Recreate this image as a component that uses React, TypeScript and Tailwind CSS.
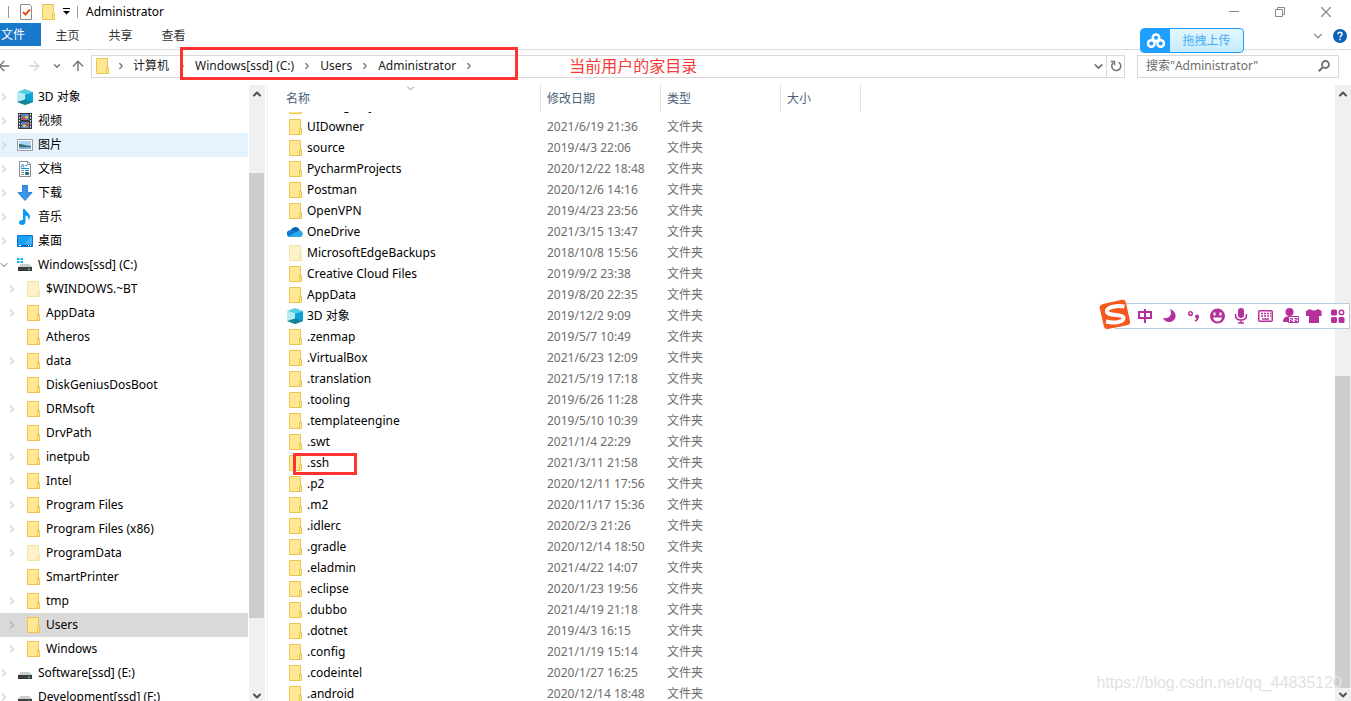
import React from "react";
import { ArrowLeft, ArrowRight, ArrowUp, ChevronDown, ChevronRight, ChevronUp, X } from "lucide-react";

type IconKind =
  | "folder"
  | "faded"
  | "onedrive"
  | "cube"
  | "video"
  | "picture"
  | "document"
  | "download"
  | "music"
  | "desktop"
  | "system"
  | "drive";

function ItemIcon({ kind }: { kind: IconKind }) {
  const common = { width: 16, height: 16, viewBox: "0 0 16 16", className: "shrink-0", "aria-hidden": true };
  switch (kind) {
    case "folder":
    case "faded":
      return (
        <svg {...common} opacity={kind === "faded" ? 0.5 : 1}>
          <path d="M2.5 .5h11v15h-11z" fill="#ffe794" stroke="#eac54f" />
          <path d="M12.5 9.5h2v6h-2z" fill="#ffe794" stroke="#eac54f" />
        </svg>
      );
    case "onedrive":
      return (
        <svg {...common}>
          <path d="M3.500 6.500A5 5 0 0 1 12.500 5.500L13 8 8 11 2 13Z" fill="#0364b8" />
          <path d="M3.200 13A3.300 3.300 0 0 1 3.300 6.200C6 5.500 8 7 10 8L5 13Z" fill="#0f78d4" />
          <path d="M1.500 12.500L9.500 7.800C11 6.300 13.500 5.800 15 7.600A3.300 3.300 0 0 1 13 13H3.200Z" fill="#28a8ea" />
        </svg>
      );
    case "cube":
      return (
        <svg {...common}>
          <path d="M0 3 8 0 16 3 8 5.500Z" fill="#55cfe0" />
          <path d="M0 3 8 5.500V16L0 13Z" fill="#b5ecf3" />
          <path d="M16 3 8 5.500V16l8-3Z" fill="#0aa4d6" />
          <path d="M0 13 8 10.500 16 13 8 16Z" fill="#16839b" />
        </svg>
      );
    case "video":
      return (
        <svg {...common}>
          <path d="M1 0h14v16H1z" fill="#3a3a3a" />
          <path d="M4 1h8v6H4z" fill="#5b83cc" />
          <path d="M4 9h8v6H4z" fill="#5b83cc" />
          <path d="M5 4h3v3H5zM9 10h2v3H9z" fill="#d9502e" />
          <path d="M8 3h3v2H8zM6 12h3v2H6z" fill="#e8c13c" />
          <path d="M2.500 1v15M13.500 1v15" stroke="#fff" strokeDasharray="1.500 1.500" />
        </svg>
      );
    case "picture":
      return (
        <svg {...common}>
          <path d="M.5 2.500h15v11H.5z" fill="#fff" stroke="#9a9a9a" />
          <path d="M2 4h12v8H2z" fill="#a9d5f2" />
          <path d="M2 7c4 0 7 2 12 2v2H2z" fill="#2f6f6e" />
          <path d="M2 10h12v2H2z" fill="#7fb0dc" />
        </svg>
      );
    case "document":
      return (
        <svg {...common}>
          <path d="M2.500 .5H11L13.500 3v12.500h-11z" fill="#fff" stroke="#8c8c8c" />
          <path d="M10.500 .5V3.500h3" fill="none" stroke="#8c8c8c" />
          <path d="M4 6.500 5.500 3 7 6.500M8 4.500h2M4 7.500h8M8 9.500h4" fill="none" stroke="#1b8ad6" />
          <path d="M4 9.500h3M4 11.500h3M4 13.500h3" stroke="#999" />
          <path d="M8 11h4v3H8z" fill="#3d6f86" />
        </svg>
      );
    case "download":
      return (
        <svg {...common}>
          <path d="M5.500 .5h5v7h4.500L8 15.500 1 7.500h4.500Z" fill="#3a96e8" stroke="#2c7fd0" />
        </svg>
      );
    case "music":
      return (
        <svg {...common}>
          <path
            d="M6 0h2c.5 3 5 4 5 7.500 0 1.500-.5 2.500-1.500 3.500.3-3-1-4-3-4.500V12.500C8.500 15 7 16 5 16c-1.700 0-3-.8-3-2.400C2 12 4 10.800 6 11.200Z"
            fill="#0c98f5"
          />
        </svg>
      );
    case "desktop":
      return (
        <svg {...common}>
          <path d="M.5 2.500h15v11H.5z" fill="#18a0fb" stroke="#0a78d0" />
          <path d="M15 3v8L7 11Z" fill="#3eb4ff" />
          <path d="M1 12.500h14" stroke="#0b5fa8" />
          <path d="M2 12.500h2M11 12.500h1M13 12.500h1" stroke="#fff" />
        </svg>
      );
    case "system":
    case "drive":
      return (
        <svg {...common}>
          {kind === "system" && (
            <path d="M0 1h2.500v2H0zM3.500 1H6v2H3.500zM0 4h2.500v2H0zM3.500 4H6v2H3.500z" fill="#12b4ee" />
          )}
          <path d="M3.500 7h9L15 10H1Z" fill="#cfcfcf" />
          <path d="M1 10h14v4H1z" fill="#3c3c3c" />
          <path d="M11 11.500h2V13h-2z" fill="#39e06a" />
        </svg>
      );
  }
}

type TreeItem = { name: string; icon: IconKind; level: 0 | 1; arrow?: "right" | "down"; state?: "hover" | "selected" };

const tree: TreeItem[] = [
  { name: "3D 对象", icon: "cube", level: 0, arrow: "right" },
  { name: "视频", icon: "video", level: 0, arrow: "right" },
  { name: "图片", icon: "picture", level: 0, arrow: "right", state: "hover" },
  { name: "文档", icon: "document", level: 0, arrow: "right" },
  { name: "下载", icon: "download", level: 0, arrow: "right" },
  { name: "音乐", icon: "music", level: 0, arrow: "right" },
  { name: "桌面", icon: "desktop", level: 0, arrow: "right" },
  { name: "Windows[ssd] (C:)", icon: "system", level: 0, arrow: "down" },
  { name: "$WINDOWS.~BT", icon: "faded", level: 1, arrow: "right" },
  { name: "AppData", icon: "folder", level: 1, arrow: "right" },
  { name: "Atheros", icon: "folder", level: 1 },
  { name: "data", icon: "folder", level: 1, arrow: "right" },
  { name: "DiskGeniusDosBoot", icon: "folder", level: 1 },
  { name: "DRMsoft", icon: "folder", level: 1, arrow: "right" },
  { name: "DrvPath", icon: "folder", level: 1 },
  { name: "inetpub", icon: "folder", level: 1, arrow: "right" },
  { name: "Intel", icon: "folder", level: 1, arrow: "right" },
  { name: "Program Files", icon: "folder", level: 1, arrow: "right" },
  { name: "Program Files (x86)", icon: "folder", level: 1, arrow: "right" },
  { name: "ProgramData", icon: "faded", level: 1, arrow: "right" },
  { name: "SmartPrinter", icon: "folder", level: 1 },
  { name: "tmp", icon: "folder", level: 1, arrow: "right" },
  { name: "Users", icon: "folder", level: 1, arrow: "right", state: "selected" },
  { name: "Windows", icon: "folder", level: 1, arrow: "right" },
  { name: "Software[ssd] (E:)", icon: "drive", level: 0, arrow: "right" },
  { name: "Development[ssd] (F:)", icon: "drive", level: 0, arrow: "right" },
];

type FileRow = { name: string; date: string; icon?: IconKind; marked?: boolean };

const files: FileRow[] = [
  { name: "UIDowner", date: "2021/6/19 21:36" },
  { name: "source", date: "2019/4/3 22:06" },
  { name: "PycharmProjects", date: "2020/12/22 18:48" },
  { name: "Postman", date: "2020/12/6 14:16" },
  { name: "OpenVPN", date: "2019/4/23 23:56" },
  { name: "OneDrive", date: "2021/3/15 13:47", icon: "onedrive" },
  { name: "MicrosoftEdgeBackups", date: "2018/10/8 15:56", icon: "faded" },
  { name: "Creative Cloud Files", date: "2019/9/2 23:38" },
  { name: "AppData", date: "2019/8/20 22:35" },
  { name: "3D 对象", date: "2019/12/2 9:09", icon: "cube" },
  { name: ".zenmap", date: "2019/5/7 10:49" },
  { name: ".VirtualBox", date: "2021/6/23 12:09" },
  { name: ".translation", date: "2021/5/19 17:18" },
  { name: ".tooling", date: "2019/6/26 11:28" },
  { name: ".templateengine", date: "2019/5/10 10:39" },
  { name: ".swt", date: "2021/1/4 22:29" },
  { name: ".ssh", date: "2021/3/11 21:58", marked: true },
  { name: ".p2", date: "2020/12/11 17:56" },
  { name: ".m2", date: "2020/11/17 15:36" },
  { name: ".idlerc", date: "2020/2/3 21:26" },
  { name: ".gradle", date: "2020/12/14 18:50" },
  { name: ".eladmin", date: "2021/4/22 14:07" },
  { name: ".eclipse", date: "2020/1/23 19:56" },
  { name: ".dubbo", date: "2021/4/19 21:18" },
  { name: ".dotnet", date: "2019/4/3 16:15" },
  { name: ".config", date: "2021/1/19 15:14" },
  { name: ".codeintel", date: "2020/1/27 16:25" },
  { name: ".android", date: "2020/12/14 18:48" },
];

function TitleBar() {
  return (
    <header className="flex h-[23px] shrink-0 items-center pl-2">
      <span className="h-3 w-px bg-[#999]" />
      <svg className="ml-[10px]" width="16" height="16" viewBox="0 0 16 16" aria-hidden>
        <path d="M1.500 .5h9l2 2v13h-11z" fill="#fff" stroke="#8a8a8a" />
        <path d="M4 8l2.500 2.500 4.500-5" fill="none" stroke="#e8501e" strokeWidth="2" />
      </svg>
      <span className="ml-[5px]">
        <ItemIcon kind="folder" />
      </span>
      <button aria-label="自定义快速访问工具栏" className="ml-[6px]">
        <svg width="9" height="7" viewBox="0 0 9 7" aria-hidden>
          <path d="M1 .5h7" stroke="#000" />
          <path d="M1 3h7L4.500 6.500Z" fill="#000" />
        </svg>
      </button>
      <span className="ml-[6px] h-3 w-px bg-[#999]" />
      <h1 className="ml-2 flex-1">Administrator</h1>
      <div className="mr-[2px] flex items-center text-[#888]">
        <button aria-label="最小化" className="flex w-[46px] justify-center">
          <span className="h-px w-[10px] bg-[#888]" />
        </button>
        <button aria-label="还原" className="flex w-[46px] justify-center">
          <svg width="10" height="10" viewBox="0 0 10 10" fill="none" stroke="currentColor" aria-hidden>
            <path d="M.5 2.500h7v7h-7zM2.500 2.500v-2h7v7h-2" />
          </svg>
        </button>
        <button aria-label="关闭" className="flex w-[46px] justify-center">
          <X size={18} strokeWidth={1.5} />
        </button>
      </div>
    </header>
  );
}

function Ribbon() {
  return (
    <nav className="flex h-[27px] shrink-0 items-start border-b border-[#dadbdc]">
      <button className="flex h-[23px] w-[41px] items-center bg-[#1979ca] pl-px pt-px text-white">文件</button>
      <button className="h-[23px] w-[53px] pt-[2px] text-[#333]">主页</button>
      <button className="h-[23px] w-[53px] pt-[2px] text-[#333]">共享</button>
      <button className="h-[23px] w-[53px] pt-[2px] text-[#333]">查看</button>
      <span className="flex-1" />
      <button aria-label="展开功能区" className="mr-2 flex h-[26px] items-center text-[#888]">
        <ChevronDown size={14} strokeWidth={2} />
      </button>
      <button aria-label="帮助" className="mr-1 flex h-[26px] items-center">
        <svg width="14" height="14" viewBox="0 0 14 14" aria-hidden>
          <circle cx="7" cy="7" r="7" fill="#0b62b8" />
          <path d="M5 5.200c0-2.600 4-2.600 4 0C9 6.800 7 6.700 7 8.600M7 9.700v1.600" fill="none" stroke="#fff" strokeWidth="1.500" />
        </svg>
      </button>
    </nav>
  );
}

function Crumb({ children }: { children: React.ReactNode }) {
  return (
    <li className="flex items-center">
      <a href="#" className="text-[#1a1a1a]">
        {children}
      </a>
      <ChevronRight size={10} strokeWidth={3} className="mx-2 text-[#777]" />
    </li>
  );
}

function AddressBar() {
  return (
    <div className="flex h-[34px] shrink-0 items-center pb-[2px] pr-3 text-[#707070]">
      <button aria-label="后退" className="-ml-1 w-4">
        <ArrowLeft size={16} />
      </button>
      <button aria-label="前进" className="ml-[14px] text-[#d5d5d5]">
        <ArrowRight size={16} />
      </button>
      <button aria-label="最近浏览的位置" className="ml-[10px]">
        <ChevronDown size={10} strokeWidth={3} />
      </button>
      <button aria-label="上移" className="ml-2">
        <ArrowUp size={16} />
      </button>
      <div className="ml-[5px] flex h-[23px] min-w-0 flex-1 items-center border border-[#d9d9d9]">
        <span className="ml-[2px]">
          <ItemIcon kind="folder" />
        </span>
        <ChevronRight size={10} strokeWidth={3} className="ml-[6px] mr-[7px]" />
        <ol className="flex items-center whitespace-nowrap">
          <Crumb>计算机</Crumb>
          <li className="relative">
            <ol className="flex items-center">
              <Crumb>Windows[ssd] (C:)</Crumb>
              <Crumb>Users</Crumb>
              <Crumb>Administrator</Crumb>
            </ol>
            <span className="absolute -left-[15px] -right-[36px] -top-[11px] h-[33px] border-[3px] border-[#fb3433]" />
          </li>
        </ol>
        <span className="ml-[87px] whitespace-nowrap text-base text-[#f83a3a]">当前用户的家目录</span>
        <span className="flex-1" />
        <button aria-label="以前的位置" className="mr-px">
          <ChevronDown size={13} strokeWidth={3} />
        </button>
        <button aria-label="刷新" className="flex h-full w-[18px] items-center justify-center border-l border-[#d9d9d9]">
          <svg width="12" height="12" viewBox="0 0 12 12" fill="none" stroke="currentColor" strokeWidth="1.500" aria-hidden>
            <path d="M8.500 2.200A4.500 4.500 0 1 1 3.200 2.800" />
            <path d="M.8 1.500H4.500V5.200" />
          </svg>
        </button>
      </div>
      <label className="ml-3 flex h-[23px] w-[202px] items-center border border-[#d9d9d9] px-2">
        <input
          aria-label="搜索"
          placeholder={'搜索"Administrator"'}
          className="min-w-0 flex-1 outline-none placeholder:text-[#6d6d6d]"
        />
        <svg width="12" height="12" viewBox="0 0 12 12" fill="none" stroke="currentColor" strokeWidth="1.800" aria-hidden>
          <circle cx="7.500" cy="4.500" r="3.500" />
          <path d="M5 7 .8 11.200" strokeWidth="2.200" />
        </svg>
      </label>
    </div>
  );
}

function UploadButton() {
  return (
    <button className="absolute right-[107px] top-7 flex h-[25px] w-[104px] items-center overflow-hidden rounded-[4px] border border-[#1e9bff] bg-gradient-to-b from-[#e4f7ff] to-[#c6ecff] text-[#45adf5]">
      <span className="flex h-full w-[29px] items-center justify-center bg-[#1e9fff]">
        <svg width="20" height="16" viewBox="0 0 20 16" fill="none" stroke="#fff" strokeWidth="2.500" aria-hidden>
          <circle cx="10" cy="4.800" r="3.300" />
          <circle cx="5.300" cy="10.500" r="3.300" />
          <circle cx="14.700" cy="10.500" r="3.300" />
        </svg>
      </span>
      <span className="flex-1">拖拽上传</span>
    </button>
  );
}

function TreePane() {
  return (
    <ul className="min-w-0 flex-1 overflow-hidden pt-px">
      {tree.map((t) => (
        <li
          key={t.name}
          className={
            "flex h-6 items-center whitespace-nowrap " +
            (t.state === "hover" ? "bg-[#e5f3ff] " : t.state === "selected" ? "bg-[#d9d9d9] " : "") +
            (t.level === 1 ? "pl-[6px]" : "")
          }
        >
          <span
            className={
              "flex shrink-0 " +
              (t.state === "selected" ? "text-[#b5b5b5] " : "text-[#d5d5d5] ") +
              (t.level === 1 ? "w-[19px]" : "-ml-[2px] w-[19px]")
            }
          >
            {t.arrow === "right" && <ChevronRight size={12} strokeWidth={3} />}
            {t.arrow === "down" && <ChevronDown size={12} strokeWidth={3} className="text-[#b5b5b5]" />}
          </span>
          <ItemIcon kind={t.icon} />
          <a href="#" className="ml-[5px] text-black">
            {t.name}
          </a>
        </li>
      ))}
    </ul>
  );
}

const arrowClass = "flex w-[15px] shrink-0 items-center justify-center text-[#505050]";

function TreeScroll() {
  return (
    <div className="ml-px mt-px flex w-4 shrink-0 flex-col bg-[#f0f0f0]">
      <button aria-label="向上滚动" className={arrowClass + " h-[18px]"}>
        <ChevronUp size={12} strokeWidth={4} />
      </button>
      <span className="flex-[70]" />
      <span className="w-[15px] flex-[445] bg-[#cdcdcd]" />
      <span className="flex-[72]" />
      <button aria-label="向下滚动" className={arrowClass + " h-[11px]"}>
        <ChevronDown size={12} strokeWidth={4} />
      </button>
    </div>
  );
}

function ListScroll() {
  return (
    <div className="mt-px flex w-4 shrink-0 flex-col bg-[#f0f0f0]">
      <button aria-label="向上滚动" className={arrowClass + " h-[18px]"}>
        <ChevronUp size={12} strokeWidth={4} />
      </button>
      <span className="flex-[273]" />
      <span className="w-[15px] flex-[312] bg-[#cdcdcd]" />
      <button aria-label="向下滚动" className={arrowClass + " h-[13px]"}>
        <ChevronDown size={12} strokeWidth={4} />
      </button>
    </div>
  );
}

const thClass = "h-7 border-r border-[#e5e5e5] p-0 pl-[6px] pt-px text-left font-normal text-[#4c607a]";

function FilePane() {
  return (
    <div className="min-w-0 flex-1 overflow-hidden">
      <table className="w-[593px] table-fixed border-separate border-spacing-0">
        <colgroup>
          <col className="w-[273px]" />
          <col className="w-[120px]" />
          <col className="w-[120px]" />
          <col className="w-20" />
        </colgroup>
        <thead>
          <tr>
            <th className="relative h-7 border-r border-[#e5e5e5] p-0 pl-[18px] pt-px text-left font-normal text-[#4c607a]">
              名称
              <ChevronDown size={11} strokeWidth={2} className="absolute left-[137px] -top-px text-[#777]" />
            </th>
            <th className={thClass}>修改日期</th>
            <th className={thClass}>类型</th>
            <th className={thClass}>大小</th>
          </tr>
        </thead>
        <tbody>
          <tr>
            <td colSpan={4} className="p-0">
              <div className="flex h-1 items-end overflow-hidden pl-[19px]">
                <div className="flex h-[21px] shrink-0 items-center">
                  <ItemIcon kind="folder" />
                  <span className="ml-1">WinRegistry</span>
                </div>
              </div>
            </td>
          </tr>
          {files.map((f) => (
            <tr key={f.name} className="h-[21px]">
              <td className="p-0 pl-[19px]">
                <div className="relative flex h-[21px] items-center">
                  <ItemIcon kind={f.icon ?? "folder"} />
                  <a href="#" className="ml-1 text-black">
                    {f.name}
                  </a>
                  {f.marked && (
                    <span className="absolute left-[6px] top-px h-[22px] w-16 border-[3px] border-[#fb3433]" />
                  )}
                </div>
              </td>
              <td className="p-0 pl-[6px] text-[#6d6d6d]">{f.date}</td>
              <td className="p-0 pl-[6px] text-[#6d6d6d]">文件夹</td>
              <td />
            </tr>
          ))}
        </tbody>
      </table>
    </div>
  );
}

function InputToolbar() {
  return (
    <div className="absolute right-px top-[303px] flex h-[26px] w-[235px] items-center border border-[#b8cbe6] bg-white text-[#b5309a]">
      <svg className="absolute -left-[17px] -top-[5px]" width="32" height="32" viewBox="0 0 32 32" aria-hidden>
        <path d="M4 5 23 .8q3-.5 3.700 2L31 22q.5 3-2 4L9 30q-3 .5-4-2L.7 9Q.3 6 4 5Z" fill="#f4581c" />
        <path
          d="M25.500 7.500C18 6 7.500 8 8 12.500c.5 5 16.500 2 16.500 6.500 0 4.500-10 5.500-17.500 3.500"
          fill="none"
          stroke="#fff"
          strokeWidth="4"
        />
      </svg>
      <svg className="ml-5 shrink-0" width="212" height="24" viewBox="0 0 212 24" fill="none" stroke="currentColor" aria-hidden>
        <path d="M3 8h12v6H3zM9 5v14" strokeWidth="2" />
        <path d="M34 5c3 6-1 10-7 9 2 5 8 5 11 2s2-9-4-11Z" fill="currentColor" stroke="none" />
        <circle cx="54.500" cy="9.500" r="1.800" strokeWidth="1.500" />
        <circle cx="61" cy="12.500" r="2" fill="currentColor" stroke="none" />
        <path d="M62 13q0 3-3 4" strokeWidth="1.500" />
        <circle cx="81.500" cy="12" r="7.500" fill="currentColor" stroke="none" />
        <path d="M78.500 8.500v3M84.500 8.500v3" stroke="#fff" strokeWidth="2" />
        <path d="M77 13.500h9q-1 4-4.500 4T77 13.500Z" fill="#fff" stroke="none" />
        <rect x="102" y="4" width="6" height="10" rx="3" fill="currentColor" stroke="none" />
        <path d="M99.500 10v1q0 5 5.500 5t5.500-5v-1M105 16v3M102 19h6" strokeWidth="1.500" />
        <rect x="122.750" y="6.750" width="13.500" height="10.500" rx="1" strokeWidth="1.500" />
        <path d="M125 9.500h10M125 12h10" strokeDasharray="2 1" strokeWidth="1.500" />
        <path d="M126 15h7" strokeWidth="1.500" />
        <circle cx="153.500" cy="8" r="4" fill="currentColor" stroke="none" />
        <path d="M147 18q0-5 4-5.500h5l2 2v3.500Z" fill="currentColor" stroke="none" />
        <path d="M152.500 12.500h10v6h-10z" fill="#fff" />
        <path d="M154 14.500h2.500v1.500h-2v1.500h2.500M158.500 14.500h2.500v1.500h-2v1.500h2.500" />
        <path d="M174 5q3.500 3 8 0l3.500 2v5H183v7h-10v-7h-3V7Z" fill="currentColor" stroke="none" />
        <rect x="195" y="5.500" width="6" height="6" rx="1.500" fill="currentColor" stroke="none" />
        <rect x="195" y="13" width="6" height="6" rx="1.500" fill="currentColor" stroke="none" />
        <rect x="202.500" y="13" width="6" height="6" rx="1.500" fill="currentColor" stroke="none" />
        <circle cx="205.500" cy="8.500" r="2.200" strokeWidth="1.500" />
      </svg>
    </div>
  );
}

export default function App() {
  return (
    <div className="relative flex h-screen flex-col overflow-hidden bg-white font-['Noto_Sans','Noto_Sans_CJK_SC',sans-serif] text-xs text-black">
      <TitleBar />
      <Ribbon />
      <AddressBar />
      <main className="flex min-h-0 flex-1">
        <aside className="flex w-[265px] shrink-0">
          <TreePane />
          <TreeScroll />
        </aside>
        <span className="ml-[2px] w-px shrink-0 bg-[#f0f0f0]" />
        <FilePane />
        <ListScroll />
      </main>
      <UploadButton />
      <InputToolbar />
      <p className="pointer-events-none absolute bottom-[6px] right-[9px] font-['Liberation_Sans',sans-serif] text-base text-[#e2e2e2]">
        https://blog.csdn.net/qq_44835120
      </p>
    </div>
  );
}
